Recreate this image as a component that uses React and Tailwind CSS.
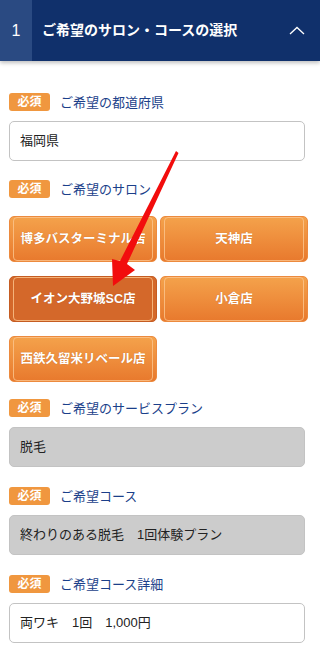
import React from "react";

const font = { fontFamily: '"Liberation Sans", "Noto Sans CJK JP", sans-serif' };

const Label = ({ text }) => (
  <div className="flex items-center h-[18px]">
    <span className="w-[41px] h-[18px] rounded-[3px] bg-[#f0973f] text-white text-[12px] font-bold flex items-center justify-center leading-none">
      必須
    </span>
    <span className="ml-[10px] text-[13px] text-[#1b3f8a] leading-none">{text}</span>
  </div>
);

const Field = ({ text, gray }) => (
  <div
    className={`mt-[10px] h-[40px] rounded-[5px] border border-[#c3c3c3] flex items-center pl-[10px] text-[13px] text-[#222] ${
      gray ? "bg-[#cccccc]" : "bg-white"
    }`}
  >
    {text}
  </div>
);

const Shop = ({ name, active }) => (
  <div
    className={`h-[46px] rounded-[5px] border flex items-center justify-center text-white text-[12.5px] font-bold ${
      active
        ? "bg-[#d4682a] border-[#c55c22]"
        : "bg-gradient-to-b from-[#f4a24b] to-[#e8792d] border-[#ec8a3e]"
    }`}
  >
    <div className="w-full h-full m-[3px] rounded-[4px] border border-[#fbc58f]/80 flex items-center justify-center [text-shadow:0_0_1px_rgba(120,50,0,0.4)]">
      {name}
    </div>
  </div>
);

export default function App() {
  return (
    <div className="relative w-[320px] h-[648px] bg-white overflow-hidden" style={font}>
      <div className="flex h-[61px] bg-[#10306b] text-white shadow-[0_2px_4px_rgba(0,0,0,0.25)]">
        <div className="w-[32px] bg-[#2a4a82] flex items-center justify-center text-[16px]">1</div>
        <div className="flex-1 flex items-center pl-[10px] text-[14px] font-bold">
          ご希望のサロン・コースの選択
        </div>
        <div className="w-[40px] flex items-center justify-center pr-[6px]">
          <svg width="16" height="9" viewBox="0 0 16 9" fill="none">
            <path d="M1 8 L8 1.5 L15 8" stroke="white" strokeWidth="1.3" />
          </svg>
        </div>
      </div>

      <div className="px-[9px] pr-[15px] pt-[32px]">
        <Label text="ご希望の都道府県" />
        <Field text="福岡県" />

        <div className="mt-[19px]">
          <Label text="ご希望のサロン" />
        </div>
        <div className="mt-[18px] grid grid-cols-2 gap-x-[3px] gap-y-[14px] w-[299px]">
          <Shop name="博多バスターミナル店" />
          <Shop name="天神店" />
          <Shop name="イオン大野城SC店" active />
          <Shop name="小倉店" />
          <Shop name="西鉄久留米リベール店" />
        </div>

        <div className="mt-[17px]">
          <Label text="ご希望のサービスプラン" />
        </div>
        <Field text="脱毛" gray />

        <div className="mt-[20px]">
          <Label text="ご希望コース" />
        </div>
        <Field text="終わりのある脱毛　1回体験プラン" gray />

        <div className="mt-[20px]">
          <Label text="ご希望コース詳細" />
        </div>
        <Field text="両ワキ　1回　1,000円" />
      </div>

      <svg className="absolute left-0 top-0 pointer-events-none" width="320" height="648" viewBox="0 0 320 648">
        <path
          d="M176 151 L178.5 153 L127 264 L135 270 L113 286 L112 259 L120 261 Z"
          fill="#f20d0d"
        />
      </svg>
    </div>
  );
}
